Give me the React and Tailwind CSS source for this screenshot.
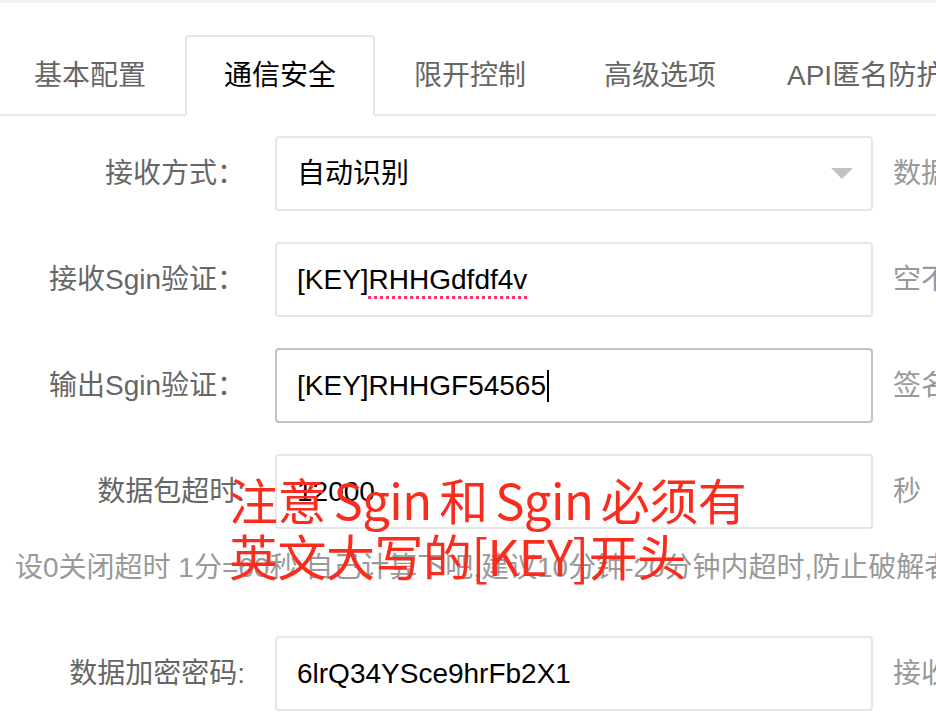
import React from "react";

const tabs = ["基本配置", "通信安全", "限开控制", "高级选项", "API匿名防护"];

const Row = ({ label, aside, children, focus }) => (
  <div className="flex items-center h-[75px]">
    <label className="w-[245px] shrink-0 text-right text-[#666] whitespace-nowrap">
      {label}
    </label>
    <div
      className={
        "ml-[30px] w-[598px] shrink-0 h-[75px] rounded-[4px] border-2 bg-white flex items-center pl-[20px] pr-[18px] text-black " +
        (focus ? "border-[#c2c2c2]" : "border-[#e6e6e6]")
      }
    >
      {children}
    </div>
    <div className="ml-[20px] text-[#999] whitespace-nowrap">{aside}</div>
  </div>
);

const App = () => {
  return (
    <div
      className="relative w-[936px] h-[712px] overflow-hidden bg-white text-[28px]"
      style={{ fontFamily: '"Liberation Sans", "Noto Sans CJK SC", sans-serif' }}
    >
      <div className="h-[3px] bg-[#f2f2f2]" />

      {/* tabs */}
      <div className="mt-[32px] border-b-2 border-[#e6e6e6] h-[81px]">
        <ul className="flex ml-[-5px] whitespace-nowrap">
          {tabs.map((t, i) => (
            <li
              key={t}
              className={
                "min-w-[190px] px-[30px] h-[81px] leading-[77px] text-center shrink-0 rounded-t-[4px] border-2 " +
                (i === 1
                  ? "border-[#e6e6e6] border-b-white bg-white text-black"
                  : "border-transparent text-[#666]")
              }
            >
              {t}
            </li>
          ))}
        </ul>
      </div>

      {/* form */}
      <div className="mt-[20px] flex flex-col gap-[31px]">
        <Row label="接收方式：" aside="数据接收方式">
          <span className="flex-1">自动识别</span>
          <svg width="22" height="11" viewBox="0 0 22 11">
            <path d="M0 0 L22 0 L11 11 Z" fill="#c2c2c2" />
          </svg>
        </Row>
        <Row label="接收Sgin验证：" aside="空不验证">
          <span>
            [KEY]
            <span className="underline decoration-dotted decoration-[#f36] decoration-[3px] underline-offset-[7px]">
              RHHGdfdf4v
            </span>
          </span>
        </Row>
        <Row label="输出Sgin验证：" aside="签名验证" focus>
          <span>[KEY]RHHGF54565</span>
          <span className="inline-block w-[2px] h-[32px] bg-black ml-[1px]" />
        </Row>
        <Row label="数据包超时:" aside="秒">
          <span>12000</span>
        </Row>
      </div>

      <div className="mt-[24px] pl-[15px] text-[#999] whitespace-nowrap leading-[30px]">
        设0关闭超时 1分=60秒 自己计算下吧,建议10分钟-20分钟内超时,防止破解者
      </div>

      <div className="mt-[53px]">
        <Row label="数据加密密码:" aside="接收数据">
          <span>6lrQ34YSce9hrFb2X1</span>
        </Row>
      </div>

      {/* annotation */}
      <div
        className="absolute left-[229px] top-[471px] text-[49px] leading-[56px] text-[#fb2b1e] whitespace-nowrap tracking-[-0.5px]"
        style={{ fontFamily: '"Noto Sans CJK SC", sans-serif' }}
      >
        <div className="[word-spacing:-3px]">注意 Sgin 和 Sgin 必须有</div>
        <div>英文大写的[KEY]开头</div>
      </div>
    </div>
  );
};

export default App;
